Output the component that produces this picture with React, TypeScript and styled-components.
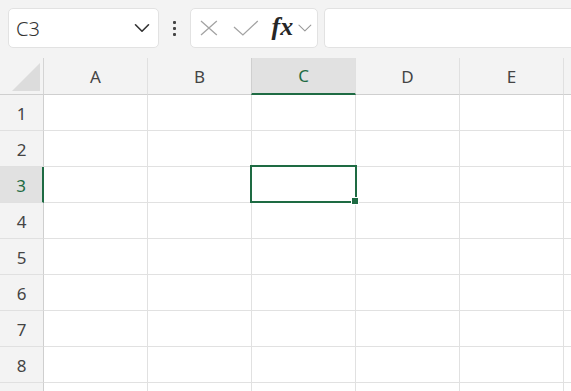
import React from "react";
import styled, { createGlobalStyle, css } from "styled-components";
import { ChevronDown } from "lucide-react";

const GlobalStyle = createGlobalStyle`
  html, body {
    margin: 0;
    padding: 0;
    background: #f3f3f3;
    overflow: hidden;
  }
  body {
    font-family: "Noto Sans", "Open Sans", sans-serif;
  }
`;

const green = "#1e6b43";

// Toolbar
const Toolbar = styled.div`
  display: flex;
  align-items: center;
  height: 58px;
  padding: 0 0 2px 8px;
  box-sizing: border-box;
  background: #f3f3f3;
  overflow: hidden;
`;

const Box = styled.div`
  display: flex;
  align-items: center;
  height: 40px;
  box-sizing: border-box;
  background: #fff;
  border: 1px solid #e2e2e2;
  border-radius: 5px;
`;

const NameBox = styled(Box)`
  width: 151px;
  padding: 0 3px 0 7px;
  justify-content: space-between;
  font-size: 20px;
  font-weight: 300;
  color: #333;
`;

const Dots = styled.div`
  width: 31px;
  display: flex;
  flex-direction: column;
  align-items: center;
  gap: 3px;

  span {
    width: 3px;
    height: 3px;
    border-radius: 1px;
    background: #444;
  }
`;

const FxBox = styled(Box)`
  width: 128px;
  padding: 0 0 0 9px;
`;

const FxText = styled.span`
  font-family: "Liberation Serif", "DejaVu Serif", serif;
  font-style: italic;
  font-weight: bold;
  font-size: 26px;
  line-height: 1;
  color: #262626;
  margin: -2px 0 0 13px;
`;

const FormulaInput = styled(Box)`
  flex: 1;
  margin-left: 6px;
  border-right: none;
  border-radius: 5px 0 0 5px;
`;

// Grid
const Grid = styled.div`
  display: grid;
  grid-template-columns: 44px repeat(6, 104px);
  grid-auto-rows: 36px;
  grid-template-rows: 37px;
  background: #fff;
`;

const Corner = styled.div`
  background: #f3f3f3;
  border-right: 1px solid #d4d4d4;
  border-bottom: 1px solid #cfcfcf;
  box-sizing: border-box;
  display: flex;
  align-items: flex-end;
  justify-content: flex-end;
  padding: 0 3px 3px 0;

  svg {
    display: block;
  }
`;

const ColHeader = styled.div<{ $active?: boolean }>`
  box-sizing: border-box;
  display: flex;
  align-items: center;
  justify-content: center;
  font-size: 17px;
  color: #444;
  background: #f3f3f3;
  border-right: 1px solid #e0e0e0;
  border-bottom: 1px solid #cfcfcf;
  ${(p) =>
    p.$active &&
    css`
      background: #e1e1e1;
      color: ${green};
      border-bottom: 2px solid ${green};
      border-left: 1px solid #cfcfcf;
      margin-left: -1px;
    `}
`;

const RowHeader = styled.div<{ $active?: boolean }>`
  box-sizing: border-box;
  display: flex;
  align-items: center;
  justify-content: center;
  font-size: 17px;
  color: #444;
  background: #f3f3f3;
  border-right: 1px solid #cfcfcf;
  border-bottom: 1px solid #e0e0e0;
  padding-top: 1px;
  ${(p) =>
    p.$active &&
    css`
      background: #e1e1e1;
      color: ${green};
      border-right: 2px solid ${green};
    `}
`;

const Cell = styled.div`
  position: relative;
  box-sizing: border-box;
  border-right: 1px solid #e1e1e1;
  border-bottom: 1px solid #e1e1e1;
`;

const Selection = styled.div`
  position: absolute;
  top: -2px;
  left: -2px;
  right: -2px;
  bottom: -1px;
  border: 2px solid ${green};
  pointer-events: none;
  z-index: 2;

  &::after {
    content: "";
    position: absolute;
    right: -4px;
    bottom: -4px;
    width: 6px;
    height: 6px;
    background: ${green};
    border: 1px solid #fff;
  }
`;

const CancelIcon = () => (
  <svg width="18" height="16" viewBox="0 0 18 16">
    <path d="M1 1 L17 15 M17 1 L1 15" stroke="#a3a3a3" strokeWidth="1.3" fill="none" />
  </svg>
);

const EnterIcon = () => (
  <svg width="26" height="16" viewBox="0 0 26 16" style={{ marginLeft: 15 }}>
    <polyline points="1,7 10,15 25,1" stroke="#a3a3a3" strokeWidth="1.3" fill="none" />
  </svg>
);

const columns = ["A", "B", "C", "D", "E", ""];
const rows = [1, 2, 3, 4, 5, 6, 7, 8];

const App: React.FC = () => {
  return (
    <>
      <GlobalStyle />
      <Toolbar>
        <NameBox>
          <span>C3</span>
          <ChevronDown size={26} strokeWidth={1.5} color="#333" />
        </NameBox>
        <Dots>
          <span />
          <span />
          <span />
        </Dots>
        <FxBox>
          <CancelIcon />
          <EnterIcon />
          <FxText>fx</FxText>
          <ChevronDown size={24} strokeWidth={1.1} color="#999" />
        </FxBox>
        <FormulaInput />
      </Toolbar>

      <Grid>
        <Corner>
          <svg width="28" height="28" viewBox="0 0 28 28">
            <polygon points="28,0 28,28 0,28" fill="#dcdcdc" />
          </svg>
        </Corner>
        {columns.map((c) => (
          <ColHeader key={c || "F"} $active={c === "C"}>
            {c}
          </ColHeader>
        ))}
        {rows.map((r) => (
          <React.Fragment key={r}>
            <RowHeader $active={r === 3}>{r}</RowHeader>
            {columns.map((c) => (
              <Cell key={c || "F"}>{r === 3 && c === "C" && <Selection />}</Cell>
            ))}
          </React.Fragment>
        ))}
        <RowHeader />
        {columns.map((c) => (
          <Cell key={c || "F"} />
        ))}
      </Grid>
    </>
  );
};

export default App;
